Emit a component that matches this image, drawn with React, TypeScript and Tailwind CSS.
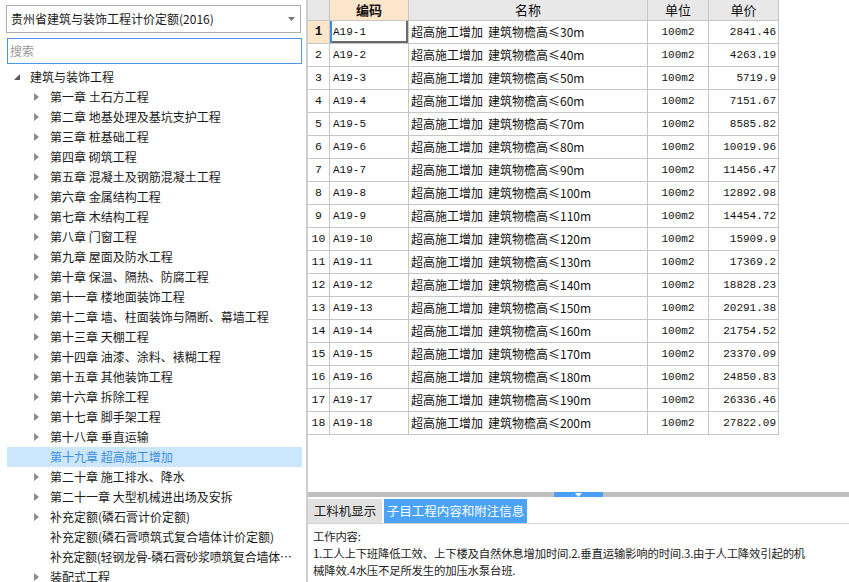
import React from 'react';

type TreeItem = { label: string; arrow?: boolean; selected?: boolean; truncate?: boolean };

const treeItems: TreeItem[] = [
  { label: '第一章 土石方工程', arrow: true },
  { label: '第二章 地基处理及基坑支护工程', arrow: true },
  { label: '第三章 桩基础工程', arrow: true },
  { label: '第四章 砌筑工程', arrow: true },
  { label: '第五章 混凝土及钢筋混凝土工程', arrow: true },
  { label: '第六章 金属结构工程', arrow: true },
  { label: '第七章 木结构工程', arrow: true },
  { label: '第八章 门窗工程', arrow: true },
  { label: '第九章 屋面及防水工程', arrow: true },
  { label: '第十章 保温、隔热、防腐工程', arrow: true },
  { label: '第十一章 楼地面装饰工程', arrow: true },
  { label: '第十二章 墙、柱面装饰与隔断、幕墙工程', arrow: true },
  { label: '第十三章 天棚工程', arrow: true },
  { label: '第十四章 油漆、涂料、裱糊工程', arrow: true },
  { label: '第十五章 其他装饰工程', arrow: true },
  { label: '第十六章 拆除工程', arrow: true },
  { label: '第十七章 脚手架工程', arrow: true },
  { label: '第十八章 垂直运输', arrow: true },
  { label: '第十九章 超高施工增加', selected: true },
  { label: '第二十章 施工排水、降水', arrow: true },
  { label: '第二十一章 大型机械进出场及安拆', arrow: true },
  { label: '补充定额(磷石膏计价定额)', arrow: true },
  { label: '补充定额(磷石膏喷筑式复合墙体计价定额)' },
  { label: '补充定额(轻钢龙骨-磷石膏砂浆喷筑复合墙体计价定额)', truncate: true },
  { label: '装配式工程', arrow: true },
];

const rows: [string, string, string][] = [
  ['A19-1', '≤30m', '2841.46'],
  ['A19-2', '≤40m', '4263.19'],
  ['A19-3', '≤50m', '5719.9'],
  ['A19-4', '≤60m', '7151.67'],
  ['A19-5', '≤70m', '8585.82'],
  ['A19-6', '≤80m', '10019.96'],
  ['A19-7', '≤90m', '11456.47'],
  ['A19-8', '≤100m', '12892.98'],
  ['A19-9', '≤110m', '14454.72'],
  ['A19-10', '≤120m', '15909.9'],
  ['A19-11', '≤130m', '17369.2'],
  ['A19-12', '≤140m', '18828.23'],
  ['A19-13', '≤150m', '20291.38'],
  ['A19-14', '≤160m', '21754.52'],
  ['A19-15', '≤170m', '23370.09'],
  ['A19-16', '≤180m', '24850.83'],
  ['A19-17', '≤190m', '26336.46'],
  ['A19-18', '≤200m', '27822.09'],
];

const cjk = "font-['Noto_Sans_CJK_SC','Noto_Sans',sans-serif]";
const mono = "font-['Liberation_Mono','Noto_Sans_CJK_SC',monospace]";

function ArrowRight() {
  return (
    <svg width="5" height="8" viewBox="0 0 5 8" className="shrink-0">
      <path d="M0 0 L5 4 L0 8 Z" fill="#8a8a8a" />
    </svg>
  );
}

function LeftPanel() {
  return (
    <div className={`w-[307px] h-full shrink-0 border-r border-[#cfcfcf] bg-white pt-[5px] overflow-hidden ${cjk} text-[12px] text-[#1a1a1a]`}>
      <div className="ml-[6px] w-[295px] h-[28px] border border-[#adadad] flex items-center justify-between pl-[4px] pr-[5px]">
        <span className="leading-none">贵州省建筑与装饰工程计价定额(2016)</span>
        <svg width="7" height="4" viewBox="0 0 7 4">
          <path d="M0 0 L7 0 L3.5 4 Z" fill="#777" />
        </svg>
      </div>
      <div className="ml-[7px] mt-[5px] w-[295px] h-[26px] border border-[#4a98e6] flex items-center pl-[2px] text-[#9a9a9a]">
        搜索
      </div>
      <div className="ml-[7px] mt-[3px] w-[295px]">
        <div className="h-[20px] flex items-center">
          <div className="w-[23px] pl-[7px] flex items-center">
            <svg width="6" height="6" viewBox="0 0 6 6">
              <path d="M6 0 L6 6 L0 6 Z" fill="#595959" />
            </svg>
          </div>
          <span>建筑与装饰工程</span>
        </div>
        {treeItems.map((it) => (
          <div
            key={it.label}
            className={`h-[20px] flex items-center ${it.selected ? 'bg-[#cce6fb] text-[#3d8fe0]' : ''}`}
          >
            <div className="w-[43px] pl-[27px] flex items-center shrink-0">{it.arrow && <ArrowRight />}</div>
            <span className={it.truncate ? 'w-[248px] truncate tracking-[-0.3px]' : 'whitespace-nowrap'}>{it.label}</span>
          </div>
        ))}
      </div>
    </div>
  );
}

function DataTable() {
  return (
    <div className="w-[471px] text-[#111]">
      <div className={`h-[21px] flex border-b border-[#c6c6c6] bg-[#e8e8e8] ${cjk} text-[13px]`}>
        <div className="w-[22px] border-r border-[#c6c6c6]" />
        <div className="w-[79px] border-r border-[#c6c6c6] bg-[#fde6c9] flex items-center justify-center font-bold">编码</div>
        <div className="w-[239px] border-r border-[#c6c6c6] flex items-center justify-center">名称</div>
        <div className="w-[61px] border-r border-[#c6c6c6] flex items-center justify-center">单位</div>
        <div className="w-[70px] border-r border-[#c6c6c6] flex items-center justify-center">单价</div>
      </div>
      {rows.map(([code, height, price], i) => (
        <div key={code} className="h-[23px] flex border-b border-[#c6c6c6] bg-white">
          <div
            className={`w-[22px] border-r border-[#c6c6c6] flex items-center justify-center ${mono} text-[11.5px] ${
              i === 0 ? 'bg-[#fde6c9] font-bold text-[12.5px]' : ''
            }`}
          >
            {i + 1}
          </div>
          <div
            className={`w-[79px] border-r border-[#c6c6c6] flex items-center pl-[3px] ${mono} text-[11px] ${
              i === 0 ? 'shadow-[inset_2px_0_0_0_#3b8ee5,inset_-2px_-2px_0_0_#6a6a6a]' : ''
            }`}
          >
            {code}
          </div>
          <div className={`w-[239px] border-r border-[#c6c6c6] flex items-center pl-[2px] ${cjk} text-[12px] whitespace-nowrap`}>
            <span>超高施工增加</span>
            <span className="ml-[5px]">建筑物檐高{height}</span>
          </div>
          <div className={`w-[61px] border-r border-[#c6c6c6] flex items-center justify-center ${mono} text-[11px]`}>
            100m2
          </div>
          <div className={`w-[70px] border-r border-[#c6c6c6] flex items-center justify-end pr-[2px] ${mono} text-[11px]`}>
            {price}
          </div>
        </div>
      ))}
    </div>
  );
}

export default function App() {
  return (
    <div className="w-[849px] h-[582px] flex overflow-hidden bg-white">
      <LeftPanel />
      <div className="flex-1 h-full flex flex-col border-l border-[#cfcfcf]">
        <div className="h-[492px] shrink-0">
          <DataTable />
        </div>
        <div className="h-[5px] shrink-0 bg-[#c0c0c0] flex">
          <div className="ml-[246px] w-[49px] h-full bg-[#4a9ff5] flex items-center justify-center">
            <svg width="7" height="4" viewBox="0 0 7 4">
              <path d="M0 0 L7 0 L3.5 4 Z" fill="#fff" />
            </svg>
          </div>
        </div>
        <div className={`h-[27px] shrink-0 flex items-end gap-[2px] border-b border-[#d4d4d4] ${cjk} text-[12.5px]`}>
          <div className="w-[74px] h-[24px] bg-[#e1e1e1] text-[#222] flex items-center justify-center">工料机显示</div>
          <div className="w-[143px] h-[24px] bg-[#4aa3f7] text-white flex items-center justify-center">子目工程内容和附注信息</div>
        </div>
        <div className={`pt-[4px] pl-[5px] ${cjk} text-[11.4px] tracking-[-0.2px] leading-[17px] text-[#222]`}>
          <div className="whitespace-nowrap">工作内容:</div>
          <div className="whitespace-nowrap">1.工人上下班降低工效、上下楼及自然休息增加时间.2.垂直运输影响的时间.3.由于人工降效引起的机</div>
          <div className="whitespace-nowrap">械降效.4水压不足所发生的加压水泵台班.</div>
        </div>
      </div>
    </div>
  );
}
